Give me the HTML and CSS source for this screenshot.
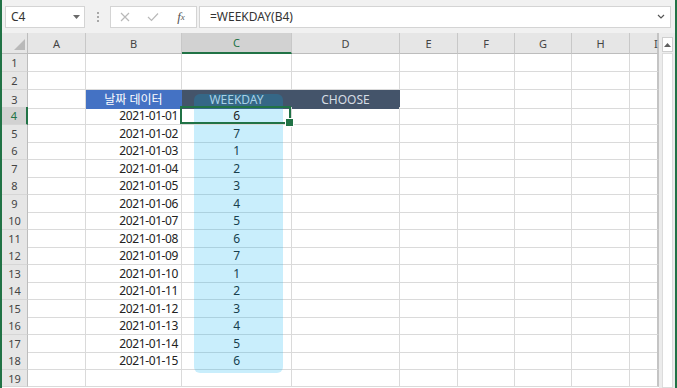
FILE: index.html
```html
<!DOCTYPE html>
<html lang="ko">

<head>
    <meta charset="UTF-8">
    <title>WEEKDAY</title>
    <link rel="stylesheet" href="styles.css">
</head>

<body>
    <div class="app">
        <div class="formula-bar">
            <div class="name-box">
                <span>C4</span>
                <svg width="7" height="4" viewBox="0 0 7 4"><polygon points="0,0 7,0 3.5,4" fill="#6a6a6a"/></svg>
            </div>
            <div class="grip"><i></i><i></i><i></i></div>
            <div class="fx-buttons">
                <span class="btn">
                    <svg width="10" height="10" viewBox="0 0 10 10"><path d="M1 1 L9 9 M9 1 L1 9" stroke="#b9b9b9" stroke-width="1.2" fill="none"/></svg>
                </span>
                <span class="btn">
                    <svg width="12" height="10" viewBox="0 0 12 10"><path d="M1 5 L4.5 8.5 L11 1.5" stroke="#b9b9b9" stroke-width="1.2" fill="none"/></svg>
                </span>
                <span class="btn fx">f<sub>x</sub></span>
            </div>
            <div class="formula-input">
                <span>=WEEKDAY(B4)</span>
                <svg width="8" height="5" viewBox="0 0 8 5"><path d="M1 1 L4 4 L7 1" stroke="#555" stroke-width="1.2" fill="none"/></svg>
            </div>
        </div>

        <div class="sheet">
            <div class="grid">
                <div class="row heads">
                    <div class="corner"><svg width="11" height="11" viewBox="0 0 11 11"><polygon points="11,0 11,11 0,11" fill="#b9b9b9"/></svg></div>
                    <div class="ch">A</div>
                    <div class="ch">B</div>
                    <div class="ch sel">C</div>
                    <div class="ch">D</div>
                    <div class="ch">E</div>
                    <div class="ch">F</div>
                    <div class="ch">G</div>
                    <div class="ch">H</div>
                    <div class="ch cut">I</div>
                </div>

                <div class="row tall">
                    <div class="rh">1</div><div class="c"></div><div class="c"></div><div class="c"></div><div class="c"></div><div class="c"></div><div class="c"></div><div class="c"></div><div class="c"></div><div class="c"></div>
                </div>
                <div class="row tall">
                    <div class="rh">2</div><div class="c"></div><div class="c"></div><div class="c"></div><div class="c"></div><div class="c"></div><div class="c"></div><div class="c"></div><div class="c"></div><div class="c"></div>
                </div>
                <div class="row">
                    <div class="rh">3</div><div class="c"></div><div class="c title blue">날짜 데이터</div><div class="c title dark">WEEKDAY</div><div class="c title dark">CHOOSE</div><div class="c"></div><div class="c"></div><div class="c"></div><div class="c"></div><div class="c"></div>
                </div>
                <div class="row tall">
                    <div class="rh sel">4</div><div class="c"></div><div class="c date">2021-01-01</div><div class="c num active">6</div><div class="c"></div><div class="c"></div><div class="c"></div><div class="c"></div><div class="c"></div><div class="c"></div>
                </div>
                <div class="row">
                    <div class="rh">5</div><div class="c"></div><div class="c date">2021-01-02</div><div class="c num">7</div><div class="c"></div><div class="c"></div><div class="c"></div><div class="c"></div><div class="c"></div><div class="c"></div>
                </div>
                <div class="row tall">
                    <div class="rh">6</div><div class="c"></div><div class="c date">2021-01-03</div><div class="c num">1</div><div class="c"></div><div class="c"></div><div class="c"></div><div class="c"></div><div class="c"></div><div class="c"></div>
                </div>
                <div class="row">
                    <div class="rh">7</div><div class="c"></div><div class="c date">2021-01-04</div><div class="c num">2</div><div class="c"></div><div class="c"></div><div class="c"></div><div class="c"></div><div class="c"></div><div class="c"></div>
                </div>
                <div class="row tall">
                    <div class="rh">8</div><div class="c"></div><div class="c date">2021-01-05</div><div class="c num">3</div><div class="c"></div><div class="c"></div><div class="c"></div><div class="c"></div><div class="c"></div><div class="c"></div>
                </div>
                <div class="row">
                    <div class="rh">9</div><div class="c"></div><div class="c date">2021-01-06</div><div class="c num">4</div><div class="c"></div><div class="c"></div><div class="c"></div><div class="c"></div><div class="c"></div><div class="c"></div>
                </div>
                <div class="row tall">
                    <div class="rh">10</div><div class="c"></div><div class="c date">2021-01-07</div><div class="c num">5</div><div class="c"></div><div class="c"></div><div class="c"></div><div class="c"></div><div class="c"></div><div class="c"></div>
                </div>
                <div class="row">
                    <div class="rh">11</div><div class="c"></div><div class="c date">2021-01-08</div><div class="c num">6</div><div class="c"></div><div class="c"></div><div class="c"></div><div class="c"></div><div class="c"></div><div class="c"></div>
                </div>
                <div class="row tall">
                    <div class="rh">12</div><div class="c"></div><div class="c date">2021-01-09</div><div class="c num">7</div><div class="c"></div><div class="c"></div><div class="c"></div><div class="c"></div><div class="c"></div><div class="c"></div>
                </div>
                <div class="row">
                    <div class="rh">13</div><div class="c"></div><div class="c date">2021-01-10</div><div class="c num">1</div><div class="c"></div><div class="c"></div><div class="c"></div><div class="c"></div><div class="c"></div><div class="c"></div>
                </div>
                <div class="row tall">
                    <div class="rh">14</div><div class="c"></div><div class="c date">2021-01-11</div><div class="c num">2</div><div class="c"></div><div class="c"></div><div class="c"></div><div class="c"></div><div class="c"></div><div class="c"></div>
                </div>
                <div class="row">
                    <div class="rh">15</div><div class="c"></div><div class="c date">2021-01-12</div><div class="c num">3</div><div class="c"></div><div class="c"></div><div class="c"></div><div class="c"></div><div class="c"></div><div class="c"></div>
                </div>
                <div class="row tall">
                    <div class="rh">16</div><div class="c"></div><div class="c date">2021-01-13</div><div class="c num">4</div><div class="c"></div><div class="c"></div><div class="c"></div><div class="c"></div><div class="c"></div><div class="c"></div>
                </div>
                <div class="row">
                    <div class="rh">17</div><div class="c"></div><div class="c date">2021-01-14</div><div class="c num">5</div><div class="c"></div><div class="c"></div><div class="c"></div><div class="c"></div><div class="c"></div><div class="c"></div>
                </div>
                <div class="row tall">
                    <div class="rh">18</div><div class="c"></div><div class="c date">2021-01-15</div><div class="c num">6</div><div class="c"></div><div class="c"></div><div class="c"></div><div class="c"></div><div class="c"></div><div class="c"></div>
                </div>
                <div class="row">
                    <div class="rh">19</div><div class="c"></div><div class="c"></div><div class="c"></div><div class="c"></div><div class="c"></div><div class="c"></div><div class="c"></div><div class="c"></div><div class="c"></div>
                </div>

                <div class="highlight"></div>
            </div>

            <div class="vscroll">
                <div class="up"><svg width="7" height="4" viewBox="0 0 7 4"><polygon points="0,4 7,4 3.5,0" fill="#606060"/></svg></div>
                <div class="track"></div>
            </div>
        </div>
    </div>
</body>

</html>
```

FILE: styles.css
```css
* {
    box-sizing: border-box;
}

body {
    margin: 0;
    font-family: "Noto Sans", "Noto Sans CJK KR", sans-serif;
    color: #222;
}

.app {
    width: 677px;
    height: 388px;
    overflow: hidden;
    border-left: 2px solid #217346;
    border-right: 2px solid #217346;
    background: #f1f1f1;
}

/* formula bar */

.formula-bar {
    height: 33px;
    display: flex;
    align-items: center;
    padding: 0 4px 0 3px;
}

.name-box {
    width: 80px;
    height: 22px;
    display: flex;
    align-items: center;
    justify-content: space-between;
    padding: 0 4px 0 5px;
    background: #fff;
    border: 1px solid #d4d4d4;
    font-size: 12px;
    color: #333;
}

.grip {
    width: 25px;
    display: flex;
    flex-direction: column;
    align-items: center;
    gap: 2px;
}

.grip i {
    width: 2px;
    height: 2px;
    background: #a8a8a8;
}

.fx-buttons {
    width: 87px;
    height: 22px;
    display: flex;
    align-items: center;
    background: #fff;
    border: 1px solid #d4d4d4;
}

.btn {
    width: 28px;
    display: flex;
    justify-content: center;
    align-items: center;
}

.fx {
    font-family: "Liberation Serif", serif;
    font-style: italic;
    font-size: 13px;
    color: #555;
}

.fx sub {
    font-size: 9px;
    vertical-align: -1px;
}

.formula-input {
    flex: 1;
    height: 22px;
    margin-left: 2px;
    display: flex;
    align-items: center;
    justify-content: space-between;
    padding: 0 5px 0 10px;
    background: #fff;
    border: 1px solid #d4d4d4;
    font-size: 12px;
    color: #333;
}

/* sheet */

.sheet {
    display: flex;
    height: 355px;
}

.grid {
    position: relative;
    width: 657px;
    background: #fff;
}

.row {
    display: grid;
    grid-template-columns: 26px 58px 96px 110px 108px 58px 57px 57px 58px 29px;
    height: 17px;
}

.row.tall {
    height: 18px;
}

.row.heads {
    height: 21px;
    background: #e6e6e6;
}

.corner {
    display: flex;
    justify-content: flex-end;
    align-items: flex-end;
    padding: 0 2px 3px 0;
    border-right: 1px solid #bdbdbd;
    border-bottom: 1px solid #bdbdbd;
}

.ch {
    display: flex;
    justify-content: center;
    align-items: center;
    font-size: 11px;
    color: #444;
    border-right: 1px solid #c8c8c8;
    border-bottom: 1px solid #bdbdbd;
}

.ch.sel {
    background: #d2d2d2;
    color: #217346;
    border-bottom: 2px solid #217346;
}

.ch.cut {
    justify-content: flex-start;
    padding-left: 24px;
    border-right: 2px solid #c4c4c4;
}

.rh {
    display: flex;
    justify-content: center;
    align-items: center;
    font-size: 11px;
    color: #444;
    background: #e6e6e6;
    border-right: 1px solid #bdbdbd;
    border-bottom: 1px solid #d6d6d6;
}

.rh.sel {
    background: #d2d2d2;
    color: #217346;
    border-right: 2px solid #217346;
}

.c {
    display: flex;
    align-items: center;
    padding: 0 3px;
    font-size: 12px;
    letter-spacing: -0.4px;
    border-right: 1px solid #dadada;
    border-bottom: 1px solid #dadada;
}

.c:last-child {
    border-right: 2px solid #c4c4c4;
}

.date {
    justify-content: flex-end;
}

.num {
    justify-content: center;
}

.title {
    justify-content: center;
    font-size: 12px;
    letter-spacing: 0;
}

.blue {
    background: #4472c4;
    border-color: #4472c4;
    color: #fff;
}

.dark {
    background: #44546a;
    border-color: #44546a;
    color: #d6dce4;
}

.active {
    position: relative;
    z-index: 2;
}

.active::after {
    content: "";
    position: absolute;
    top: -1px;
    left: -2px;
    right: 0;
    bottom: 0;
    border: 2px solid #217346;
}

.active::before {
    content: "";
    position: absolute;
    right: -3px;
    bottom: -3px;
    width: 7px;
    height: 7px;
    background: #217346;
    border: 1px solid #fff;
    z-index: 1;
}

.highlight {
    position: absolute;
    left: 192px;
    top: 61px;
    width: 89px;
    height: 279px;
    border-radius: 6px;
    background: rgba(0, 176, 240, 0.21);
    z-index: 1;
}

/* scrollbar */

.vscroll {
    width: 16px;
    display: flex;
    flex-direction: column;
    padding: 4px 2px 0 3px;
    background: #ececec;
}

.up {
    height: 15px;
    display: flex;
    justify-content: center;
    align-items: center;
    background: #fff;
    border: 1px solid #cfcfcf;
}

.track {
    flex: 1;
    margin-top: 1px;
    background: #fff;
    border: 1px solid #dcdcdc;
}
```
